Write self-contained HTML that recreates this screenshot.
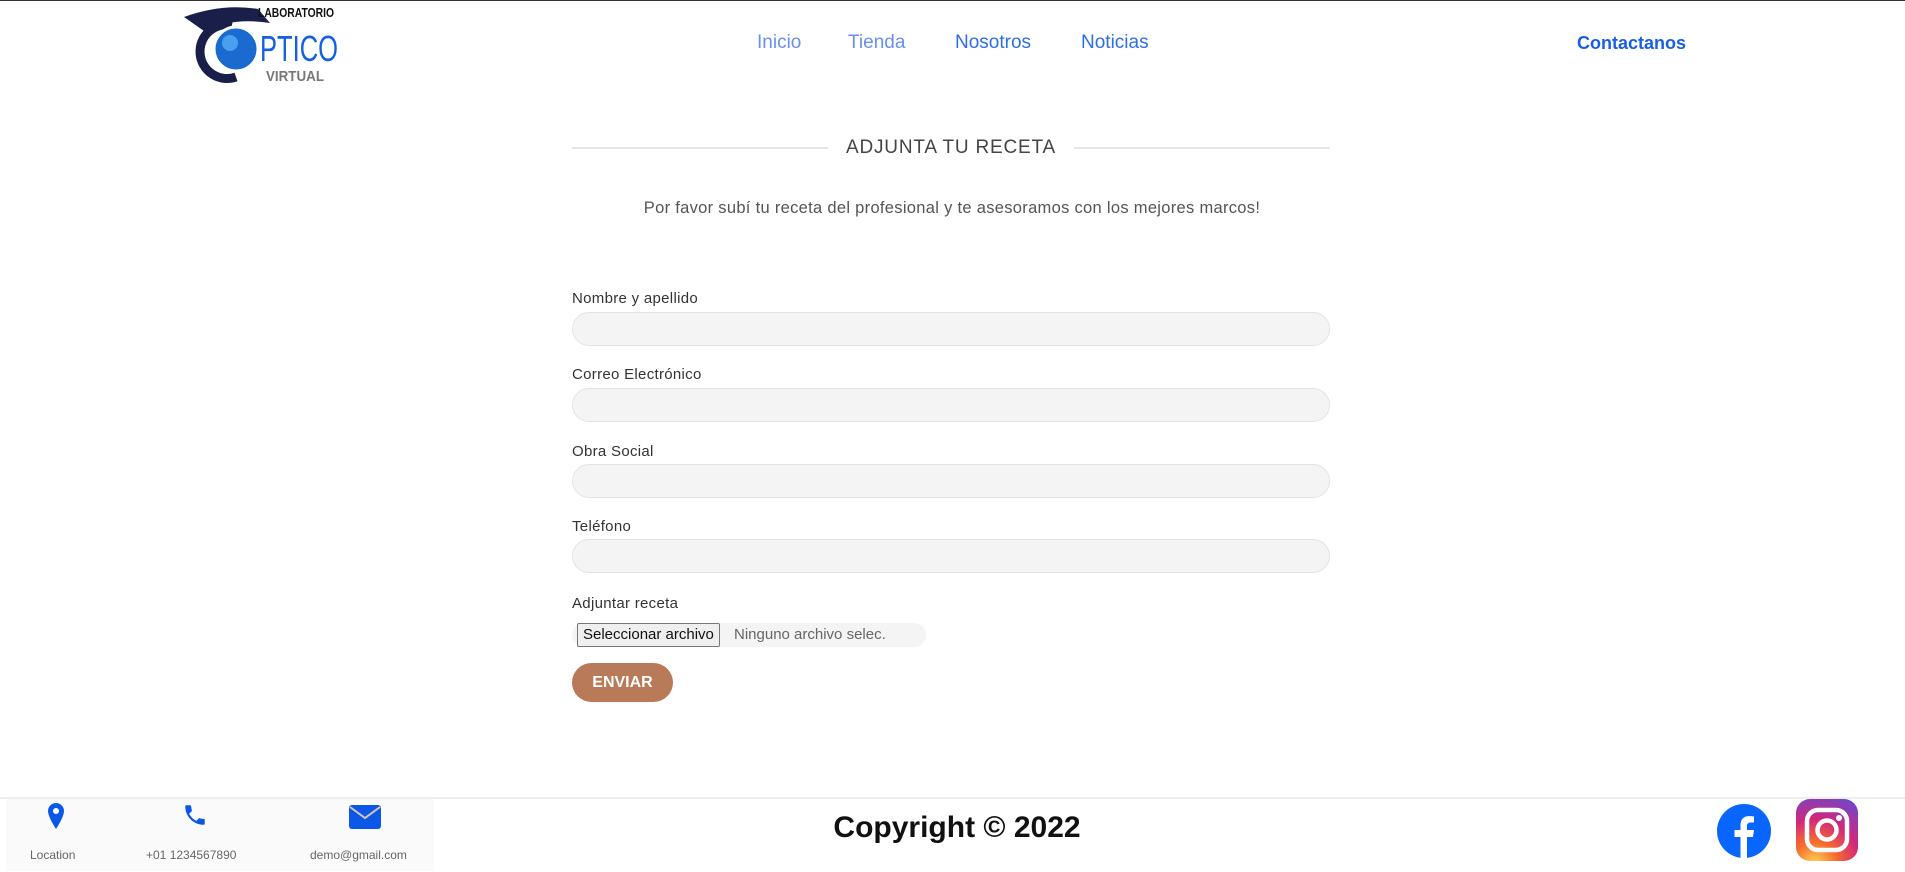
<!DOCTYPE html>
<html><head><meta charset="utf-8"><style>
*{margin:0;padding:0;box-sizing:border-box}
body{width:1905px;height:872px;background:#fff;font-family:"Liberation Sans",sans-serif;position:relative;overflow:hidden;border-top:1px solid #333}
.a{position:absolute}
.nav{font-size:19px;top:31px}
.lbl{position:absolute;left:572px;font-size:15px;letter-spacing:0.3px;color:#333}
.inp{position:absolute;left:572px;width:758px;height:34px;border:1px solid #e3e3e3;border-radius:17px;background:#f4f4f4}
</style></head><body>
<div class="a" style="left:182px;top:2px;width:170px;height:82px">
<svg width="170" height="82" viewBox="0 0 170 82">
<path d="M2 14 Q40 0 76 6 L88 20 Q50 14 22 28 Z" fill="#1a1f4a"/>
<path d="M50 22 A27 27 0 1 0 54 74" fill="none" stroke="#1a1f4a" stroke-width="9"/>
<circle cx="54" cy="46" r="22" fill="#1a6ad0"/>
<circle cx="54" cy="46" r="22" fill="none" stroke="#fff" stroke-width="3"/>
<circle cx="48" cy="40" r="8" fill="#4aa0ee"/>
<text x="76" y="14" font-family="Liberation Sans" font-weight="bold" font-size="13" fill="#111" textLength="76" lengthAdjust="spacingAndGlyphs">LABORATORIO</text>
<text x="78" y="58" font-family="Liberation Sans" font-size="36" fill="#1560e0" textLength="78" lengthAdjust="spacingAndGlyphs">PTICO</text>
<text x="84" y="78" font-family="Liberation Sans" font-weight="bold" font-size="15" fill="#777" textLength="58" lengthAdjust="spacingAndGlyphs">VIRTUAL</text>
</svg></div>
<div class="a nav" style="left:757px;color:#6a8ff0">Inicio</div>
<div class="a nav" style="left:848px;color:#6a8ff0">Tienda</div>
<div class="a nav" style="left:955px;color:#2f6ee8">Nosotros</div>
<div class="a nav" style="left:1081px;color:#2f6ee8">Noticias</div>
<div class="a nav" style="left:1577px;color:#1a5ee8;font-weight:bold;font-size:18px;top:32px">Contactanos</div>

<div class="a" style="left:572px;top:146px;width:256px;height:2px;background:#e5e5e5"></div>
<div class="a" style="left:1074px;top:146px;width:256px;height:2px;background:#e5e5e5"></div>
<div class="a" style="left:828px;top:136px;width:246px;text-align:center;font-size:19px;letter-spacing:0.8px;color:#444">ADJUNTA TU RECETA</div>
<div class="a" style="left:552px;top:198px;width:800px;text-align:center;font-size:16.5px;letter-spacing:0.3px;color:#555">Por favor subí tu receta del profesional y te asesoramos con los mejores marcos!</div>

<div class="lbl" style="top:289px">Nombre y apellido</div><div class="inp" style="top:311px"></div>
<div class="lbl" style="top:365px">Correo Electrónico</div><div class="inp" style="top:387px"></div>
<div class="lbl" style="top:442px">Obra Social</div><div class="inp" style="top:463px"></div>
<div class="lbl" style="top:517px">Teléfono</div><div class="inp" style="top:538px"></div>
<div class="lbl" style="top:594px">Adjuntar receta</div>
<div class="a" style="left:572px;top:622px;width:354px;height:24px;background:#f4f4f4;border-radius:12px"></div>
<div class="a" style="left:577px;top:622px;height:24px;padding:0 5px;border:1px solid #777;border-radius:2px;background:#efefef;font-size:15px;line-height:22px;color:#111">Seleccionar archivo</div>
<div class="a" style="left:734px;top:625px;font-size:15px;color:#666">Ninguno archivo selec.</div>
<div class="a" style="left:572px;top:662px;width:101px;height:39px;border-radius:20px;background:#b87a58;color:#fff;font-weight:bold;font-size:16px;line-height:39px;text-align:center">ENVIAR</div>

<div class="a" style="left:0;top:796px;width:1905px;height:2px;background:#eee"></div>
<div class="a" style="left:6px;top:798px;width:428px;height:72px;background:#fafafa"></div>
<svg class="a" style="left:46px;top:801px" width="20" height="28" viewBox="0 0 20 28"><path d="M10 1 A8 8 0 0 0 2 9 C2 15 10 27 10 27 C10 27 18 15 18 9 A8 8 0 0 0 10 1Z" fill="#0b57e8"/><circle cx="10" cy="9" r="3" fill="#fff"/></svg>
<svg class="a" style="left:182px;top:801px" width="26" height="26" viewBox="0 0 24 24"><path d="M6.6 10.8c1.4 2.8 3.8 5.1 6.6 6.6l2.2-2.2c.3-.3.7-.4 1-.2 1.1.4 2.3.6 3.6.6.6 0 1 .4 1 1V20c0 .6-.4 1-1 1C10.6 21 3 13.4 3 4c0-.6.4-1 1-1h3.5c.6 0 1 .4 1 1 0 1.3.2 2.5.6 3.6.1.3 0 .7-.2 1z" fill="#0b57e8"/></svg>
<svg class="a" style="left:348px;top:803px" width="34" height="26" viewBox="0 0 34 26"><rect x="1" y="1" width="32" height="24" rx="3" fill="#0b57e8"/><path d="M2 3 L17 14 L32 3" fill="none" stroke="#d8c8b0" stroke-width="2"/></svg>
<div class="a" style="left:30px;top:847px;font-size:12px;color:#666">Location</div>
<div class="a" style="left:146px;top:847px;font-size:12px;color:#666">+01 1234567890</div>
<div class="a" style="left:310px;top:847px;font-size:12px;color:#666">demo@gmail.com</div>
<div class="a" style="left:757px;top:810px;width:400px;text-align:center;font-size:30px;font-weight:bold;color:#111">Copyright © 2022</div>
<svg class="a" style="left:1716px;top:802px" width="56" height="56" viewBox="0 0 56 56"><circle cx="28" cy="28" r="27" fill="#0866ff"/><path d="M31 55 V34 h6 l1-7 h-7 v-4 c0-2 1-3.5 3.5-3.5 H38 v-6 c-1-.2-3-.4-5-.4 -5.5 0-8.5 3.3-8.5 9 V27 h-6 v7 h6 v21z" fill="#fff"/></svg>
<svg class="a" style="left:1795px;top:797px" width="64" height="64" viewBox="0 0 64 64"><defs><radialGradient id="g" cx="0.3" cy="1.05" r="1.2"><stop offset="0" stop-color="#fdd65a"/><stop offset="0.3" stop-color="#f76d2c"/><stop offset="0.6" stop-color="#d2287a"/><stop offset="1" stop-color="#6848d2"/></radialGradient></defs><rect x="1" y="1" width="62" height="62" rx="14" fill="url(#g)"/><rect x="12" y="12" width="40" height="40" rx="11" fill="none" stroke="#fff" stroke-width="4.5"/><circle cx="32" cy="32" r="9.5" fill="none" stroke="#fff" stroke-width="4.5"/><circle cx="44" cy="20" r="3" fill="#fff"/></svg>
</body></html>
